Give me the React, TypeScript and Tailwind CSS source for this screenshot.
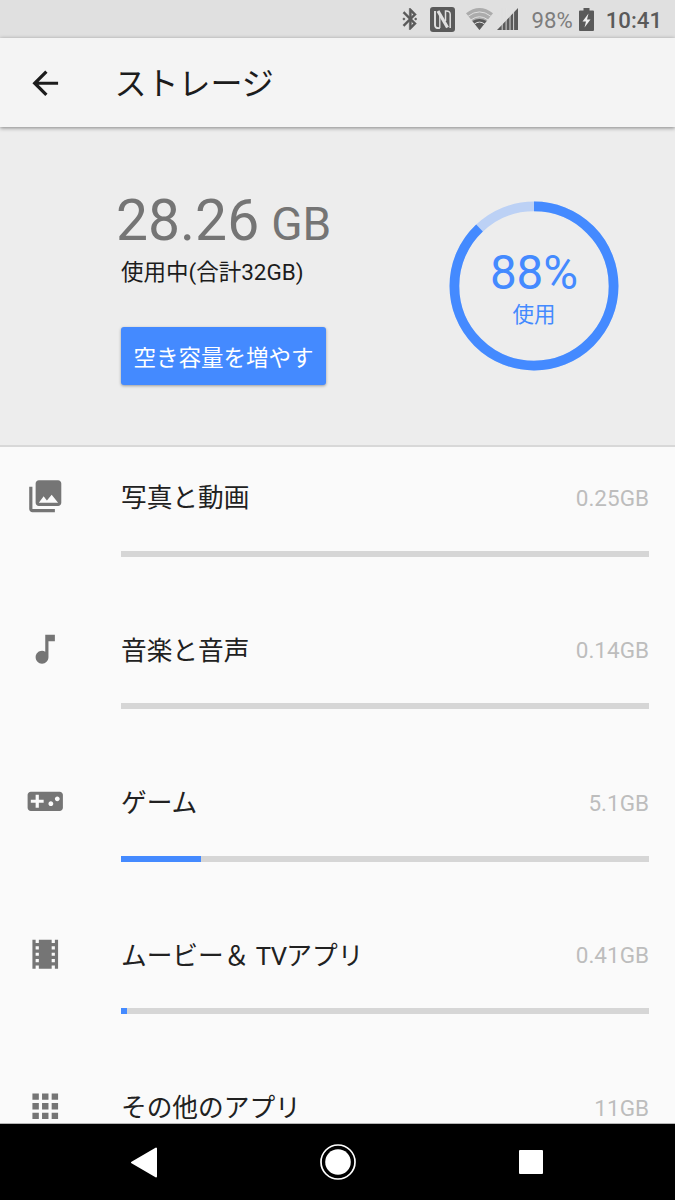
import React from 'react';

interface Category {
  name: React.ReactNode;
  size: string;
  percent: number;
  icon: string;
}

const categories: Category[] = [
  {
    name: '写真と動画',
    size: '0.25GB',
    percent: 0,
    icon: 'M22 16V4c0-1.1-.9-2-2-2H8c-1.1 0-2 .9-2 2v12c0 1.1.9 2 2 2h12c1.1 0 2-.9 2-2zm-11-4l2.03 2.71L16 11l4 5H8l3-4zM2 6v14c0 1.1.9 2 2 2h14v-2H4V6H2z',
  },
  {
    name: '音楽と音声',
    size: '0.14GB',
    percent: 0,
    icon: 'M12 3v10.55c-.59-.34-1.27-.55-2-.55-2.21 0-4 1.79-4 4s1.79 4 4 4 4-1.79 4-4V7h4V3h-6z',
  },
  {
    name: 'ゲーム',
    size: '5.1GB',
    percent: 15.15,
    icon: 'M21 6H3c-1.1 0-2 .9-2 2v8c0 1.1.9 2 2 2h18c1.1 0 2-.9 2-2V8c0-1.1-.9-2-2-2zm-10 7H8v3H6v-3H3v-2h3V8h2v3h3v2zm4.5 2c-.83 0-1.5-.67-1.5-1.5s.67-1.5 1.5-1.5 1.5.67 1.5 1.5-.67 1.5-1.5 1.5zm4-3c-.83 0-1.5-.67-1.5-1.5S18.67 9 19.5 9s1.5.67 1.5 1.5-.67 1.5-1.5 1.5z',
  },
  {
    name: (
      <>
        ムービー＆ <span className="tracking-[-0.7px]">TV</span>アプリ
      </>
    ),
    size: '0.41GB',
    percent: 1.1,
    icon: 'M18 3v2h-2V3H8v2H6V3H4v18h2v-2h2v2h8v-2h2v2h2V3h-2zM8 17H6v-2h2v2zm0-4H6v-2h2v2zm0-4H6V7h2v2zm10 8h-2v-2h2v2zm0-4h-2v-2h2v2zm0-4h-2V7h2v2z',
  },
  {
    name: 'その他のアプリ',
    size: '11GB',
    percent: 34,
    icon: 'M4 8h4V4H4v4zm6 12h4v-4h-4v4zm-6 0h4v-4H4v4zm0-6h4v-4H4v4zm6 0h4v-4h-4v4zm6-10v4h4V4h-4zm-6 4h4V4h-4v4zm6 6h4v-4h-4v4zm0 6h4v-4h-4v4z',
  },
];

function StatusBar() {
  return (
    <div className="flex h-[38px] shrink-0 items-center justify-end bg-[#e0e0e0] pr-[13px] text-[#5a5a5a]">
      <svg className="mr-[13px] h-[22px] w-[15px] fill-current stroke-current" strokeWidth="0.4" viewBox="4.2 2 14 20">
        <path d="M17.71 7.71 12 2h-1v7.59L6.41 5 5 6.41 10.59 12 5 17.59 6.41 19 11 14.41V22h1l5.71-5.71L13.41 12l4.3-4.29zM13 5.83l1.88 1.88L13 9.59V5.83zm1.88 10.46L13 18.17v-3.76l1.88 1.88z" />
        <circle cx="6" cy="12" r="1" />
        <circle cx="17" cy="12" r="1" />
      </svg>
      <svg className="mr-[11px] h-[25px] w-[25px]" viewBox="0 0 25 25">
        <rect width="25" height="25" rx="3" fill="currentColor" />
        <g fill="none" stroke="#e0e0e0">
          <path d="M9.8 21Q5 21.8 5 18V4" strokeWidth="1.9" />
          <path d="M9.8 8.5V21" strokeWidth="1.3" />
          <path d="M8 4 17.5 20.5" strokeWidth="3.2" />
          <path d="M20.2 21V7Q20 3.6 15.5 4V14" strokeWidth="1.5" />
        </g>
      </svg>
      <svg className="mr-1 h-[22px] w-[27px]" viewBox="0 0 27 22">
        <path d="M0 5.2Q13.5-5.2 27 5.2L13.5 22z" fill="#acacac" />
        <path d="M6.4 13Q13.5 9 20.6 13L13.5 22z" fill="currentColor" />
        <path d="M2.2 8.2Q13.5-.4 24.8 8.2M5 11.9Q13.5 5.6 22 11.9M8.4 16Q13.5 12.2 18.6 16" fill="none" stroke="#e0e0e0" strokeWidth="1" />
      </svg>
      <svg className="mr-[14px] h-[22px] w-[21px]" viewBox="0 0 21 22">
        <path d="M0 22 21 0v22z" fill="currentColor" />
        <path d="M5.2 0v22M9.1 0v22M13 0v22M16.6 0v22" stroke="#e0e0e0" strokeWidth="0.9" />
      </svg>
      <span className="mr-[6px] pt-0.5 text-[22.2px] leading-none text-[#7d7d7d]">98%</span>
      <svg className="mr-[12px] h-[23px] w-[15px]" viewBox="0 0 15 23">
        <path d="M4.5 0h6v2.5H14q1 0 1 1V22q0 1-1 1H1q-1 0-1-1V3.5q0-1 1-1h3.5z" fill="currentColor" />
        <path d="M9.5 5.5 3.5 13.5H7L5.5 19.5 11.5 11.5H8z" fill="#f0f0f0" />
      </svg>
      <span className="pt-0.5 text-[22.2px] font-medium leading-none">10:41</span>
    </div>
  );
}

function UsageRing({ percent }: { percent: number }) {
  return (
    <div className="relative h-[170px] w-[170px]">
      <svg className="h-full w-full -rotate-90" viewBox="0 0 170 170" fill="none" strokeWidth="9.7">
        <circle cx="85" cy="85" r="79.6" stroke="#bcd1f5" />
        <circle cx="85" cy="85" r="79.6" stroke="#448aff" pathLength="100" strokeDasharray={`${percent} 100`} />
      </svg>
      <div className="absolute inset-0 flex flex-col items-center pt-[47px] text-[#448aff]">
        <span className="text-[47.5px] leading-[50px]">{percent}%</span>
        <span className="text-[21.5px] leading-[33px]">使用</span>
      </div>
    </div>
  );
}

function CategoryRow({ name, size, percent, icon }: Category) {
  return (
    <div className="flex h-[152.5px] shrink-0 pl-[25.5px] pr-[26px] pt-[30px]">
      <svg className="h-[38.5px] w-[38.5px] shrink-0 fill-[#757575]" viewBox="0 0 24 24">
        <path d={icon} />
      </svg>
      <div className="ml-[57px] flex-1">
        <div className="flex h-[39px] items-center justify-between pt-[3px]">
          <span className="pt-0.5 text-[25.7px] leading-none text-[#212121]">{name}</span>
          <span className="text-[22.5px] leading-none text-[#bdbdbd]">{size}</span>
        </div>
        <div className="mt-[34.5px] h-[6px] bg-[#d6d6d6]">
          <div className="h-full bg-[#448aff]" style={{ width: `${percent}%` }} />
        </div>
      </div>
    </div>
  );
}

export default function App() {
  return (
    <div className="flex h-[1200px] w-[675px] flex-col overflow-hidden bg-[#fafafa] font-[Roboto,'Noto_Sans_CJK_JP',sans-serif]">
      <StatusBar />

      <header className="relative z-10 flex h-[89px] shrink-0 items-center bg-[#f4f4f4] pl-[25.5px] pt-px shadow-[0_1px_4px_rgba(0,0,0,0.45)]">
        <svg className="h-[38.5px] w-[38.5px] fill-[#1c1c1c]" viewBox="0 0 24 24">
          <path d="M20 11H7.83l5.59-5.59L12 4l-8 8 8 8 1.41-1.41L7.83 13H20v-2z" />
        </svg>
        <h1 className="ml-[50.5px] pt-0.5 text-[32px] leading-none text-[#1c1c1c]">ストレージ</h1>
      </header>

      <section className="flex h-[320px] shrink-0 justify-between border-b-2 border-[#d8d8d8] bg-[#ededed] pl-[121px] pr-[56px]">
        <div className="flex flex-col items-start pt-[60px]">
          <div className="-ml-[5px] h-[68px] whitespace-nowrap leading-[68px] text-[#757575]">
            <span className="text-[57px]">28.26</span>
            <span className="ml-3 text-[46px]">GB</span>
          </div>
          <p className="h-[34px] text-[22.5px] leading-[34px] text-[#1c1c1c]">使用中(合計32GB)</p>
          <button className="mt-[38px] h-[58px] w-[205px] rounded-[3px] bg-[#448aff] pt-1 text-[22.5px] leading-none text-white shadow-[0_1px_3px_rgba(0,0,0,0.35)]">
            空き容量を増やす
          </button>
        </div>
        <div className="pt-[74px]">
          <UsageRing percent={88} />
        </div>
      </section>

      <main className="flex min-h-0 flex-1 flex-col overflow-hidden">
        {categories.map((category) => (
          <CategoryRow key={category.size} {...category} />
        ))}
      </main>

      <nav className="flex h-[77px] shrink-0 items-center justify-between border-t border-[#b5b5b5] bg-black pl-[131px] pr-[132px]">
        <svg className="h-[31px] w-[26px]" viewBox="0 0 26 31" fill="white" stroke="white" strokeWidth="2" strokeLinejoin="round">
          <path d="M1 15.5 25 1.5v28z" />
        </svg>
        <svg className="-ml-px h-[36px] w-[36px]" viewBox="0 0 36 36">
          <circle cx="18" cy="18" r="17" fill="none" stroke="white" strokeWidth="1.7" />
          <circle cx="18" cy="18" r="12.8" fill="white" />
        </svg>
        <div className="h-6 w-6 rounded-[1px] bg-white" />
      </nav>
    </div>
  );
}
